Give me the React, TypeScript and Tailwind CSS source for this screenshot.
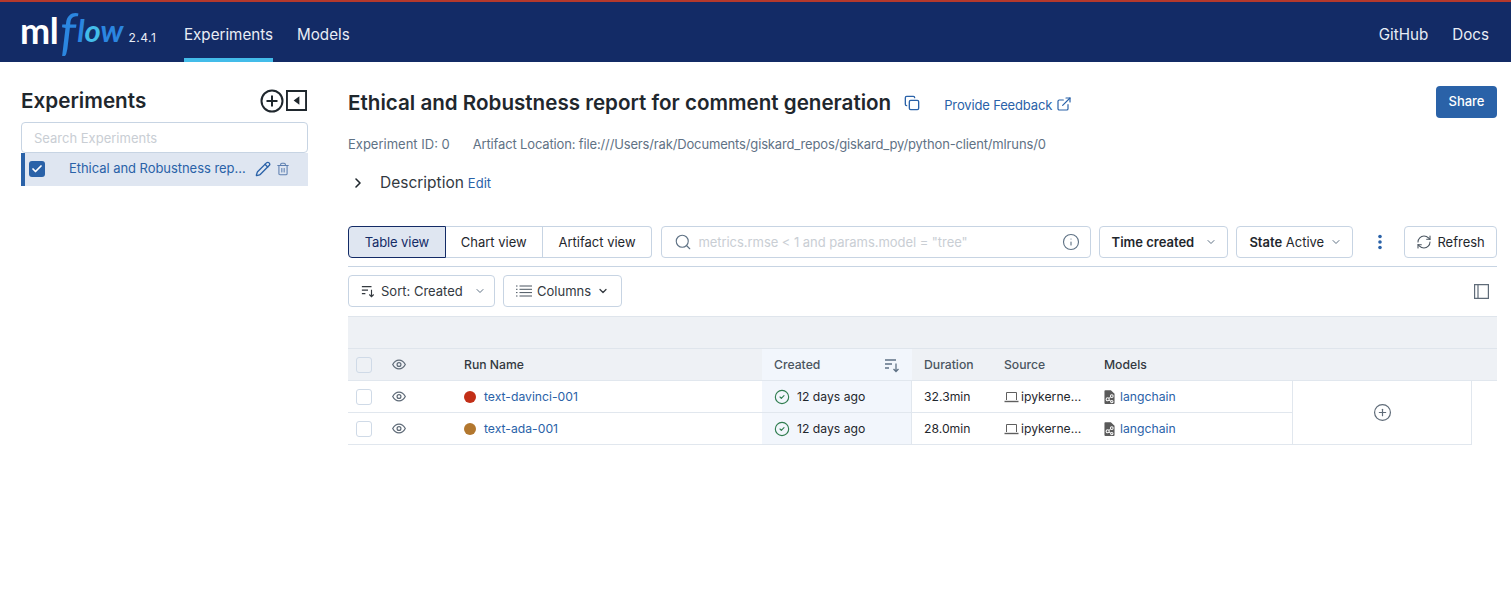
import { ChevronDown, ChevronRight, Pencil, Trash2, Search, Info, RefreshCw, Copy, ExternalLink, Check, CirclePlus, CircleCheck } from "lucide-react";

const SortIcon = ({ className }: { className?: string }) => (
  <svg viewBox="0 0 16 16" className={className} fill="none" stroke="currentColor" strokeWidth="1.3">
    <path d="M1 3h11M1 7h7M1 11h4M12 6.5v8M9.5 12l2.5 2.5 2.5-2.5" />
  </svg>
);

const EyeIcon = () => (
  <svg viewBox="0 0 16 12" className="w-[14px] h-[11px] shrink-0" fill="none" stroke="#5f6b78" strokeWidth="1.4">
    <path d="M0.8 6C2.6 2.6 5 1 8 1s5.4 1.6 7.2 5c-1.8 3.4-4.2 5-7.2 5S2.6 9.4 0.8 6z" />
    <circle cx="8" cy="6" r="2.2" />
  </svg>
);

const LaptopIcon = () => (
  <svg viewBox="0 0 15 12" className="w-[15px] h-[12px] shrink-0" fill="none" stroke="#5f5f5f" strokeWidth="1">
    <path d="M2.5 9V1.5h10V9" />
    <path d="M0.5 10.5h14" strokeWidth="1.4" />
  </svg>
);

const ColumnsIcon = () => (
  <svg viewBox="0 0 16 12" className="w-4 h-3 shrink-0" fill="none" stroke="#4a5560" strokeWidth="1">
    <path d="M0 1h1.5M0 4.3h1.5M0 7.6h1.5M0 11h1.5M3.5 1H16M3.5 4.3H16M3.5 7.6H16M3.5 11H16" />
  </svg>
);

const ModelIcon = () => (
  <svg viewBox="0 0 12 16" className="w-[11px] h-[16px] shrink-0">
    <path d="M1.5 0.5h6l4 4v10a1 1 0 0 1-1 1h-9a1 1 0 0 1-1-1v-13a1 1 0 0 1 1-1z" fill="#5a5a5a" />
    <circle cx="4" cy="10.5" r="1.7" fill="none" stroke="#fff" strokeWidth="1.1" />
    <circle cx="8.5" cy="7" r="1.5" fill="none" stroke="#fff" strokeWidth="1.1" />
    <circle cx="8.5" cy="13" r="1.3" fill="none" stroke="#fff" strokeWidth="1.1" />
    <path d="M5.2 9.6l2-1.6M5.4 11.4l2 1" stroke="#fff" strokeWidth="1" />
  </svg>
);

const runs = [
  { name: "text-davinci-001", color: "bg-[#c22f17]", duration: "32.3min" },
  { name: "text-ada-001", color: "bg-[#b2772e]", duration: "28.0min" },
];

const btn = "flex items-center h-8 rounded border";
const line = "border-[#c7d4e3]";

const Header = () => (
  <header className="h-[62px] shrink-0 bg-[#132b66] border-t-2 border-[#b5392c] flex items-stretch justify-between text-[#e8edf5] text-[15.2px]">
    <div className="flex items-stretch">
      <div className="w-[184px] pl-[20px] flex items-center" style={{ fontFamily: "Lato, sans-serif" }}>
        <span className="text-[36px] leading-none font-bold text-white tracking-[-0.5px] mb-1">ml</span>
        <span className="text-[50px] leading-none italic text-[#2b86e0] ml-[2px] mb-[4px]">f</span>
        <span className="text-[31px] leading-none italic font-bold text-[#2b86e0] ml-[1px] mb-1">l<span className="text-[#43bce9]">o</span>w</span>
        <span className="text-xs ml-[5px] mt-[12px] tracking-[0.5px]" style={{ fontFamily: "Inter, sans-serif" }}>2.4.1</span>
      </div>
      <div className="w-[89px] flex items-center justify-center border-b-4 border-[#43bce9] pt-[10px] mr-6">Experiments</div>
      <div className="flex items-center pt-[6px]">Models</div>
    </div>
    <div className="flex items-center gap-6 pr-[22px] pt-[6px]">
      <span>GitHub</span>
      <span>Docs</span>
    </div>
  </header>
);

const Sidebar = () => (
  <aside className="w-[348px] shrink-0 pl-[21px] pr-[40px] pt-[25px]">
    <div className="flex items-center justify-between h-[27px]">
      <h2 className="text-[20.7px] font-semibold text-[#1f272d]">Experiments</h2>
      <div className="flex items-center gap-[2px] mr-px">
        <svg viewBox="0 0 24 24" className="w-6 h-6" fill="none" stroke="#1f272d" strokeWidth="2">
          <circle cx="12" cy="12" r="10.5" />
          <path d="M12 6.5v11M6.5 12h11" />
        </svg>
        <svg viewBox="0 0 22 22" className="w-[21px] h-[21px]">
          <path d="M1 1h20v20H1z" fill="none" stroke="#1f272d" strokeWidth="2" />
          <path d="M14 6.5v9L8 11z" fill="#1f272d" />
        </svg>
      </div>
    </div>
    <div className="mt-[8px] h-[31px] pt-[2px] border border-[#c7d4e3] rounded flex items-center px-3 text-[13px] text-[#c9ced4]">Search Experiments</div>
    <div className="h-[33px] pb-px bg-[#dfe6f1] border-l-4 border-[#2a62a8] flex items-center text-[13px] text-[#2a62a8]">
      <span className="ml-[4px] w-4 h-4 rounded-[3px] bg-[#2a62a8] flex items-center justify-center">
        <Check className="w-3 h-3 text-white" strokeWidth={3.5} />
      </span>
      <span className="ml-6 w-[176px] whitespace-nowrap tracking-[-0.05px]">Ethical and Robustness rep…</span>
      <Pencil className="w-4 h-4 ml-[10px]" strokeWidth={2} />
      <Trash2 className="w-[14px] h-[14px] ml-[5px] text-[#5d7fb0]" strokeWidth={1.8} />
    </div>
  </aside>
);

const Toolbar = () => (
  <div className="flex items-center h-8 mt-[33px] text-[13px] text-[#1f272d]">
    <div className={`${btn} justify-center w-[98px] pt-[2px] tracking-[-0.1px] bg-[#dfe6f1] border-[#132b66] rounded-r-none text-[#132b66]`}>Table view</div>
    <div className={`${btn} ${line} justify-center w-[97px] pt-[2px] border-l-0 rounded-none`}>Chart view</div>
    <div className={`${btn} ${line} justify-center w-[110px] pt-[2px] border-l-0 rounded-l-none`}>Artifact view</div>
    <div className={`${btn} ${line} w-[430px] ml-[9px] pl-3 pr-[10px]`}>
      <Search className="w-[18px] h-[18px] text-[#5f7285]" strokeWidth={1.5} />
      <span className="ml-[6px] mt-[2px] flex-1 text-[#c9ced4] tracking-[-0.05px]">metrics.rmse &lt; 1 and params.model = "tree"</span>
      <Info className="w-[18px] h-[18px] text-[#5f7285]" strokeWidth={1.5} />
    </div>
    <div className={`${btn} ${line} w-[130px] ml-2 pl-3 pr-[10px] justify-between font-semibold`}>
      <span className="mt-[2px]">Time created</span>
      <ChevronDown className="w-3 h-3 text-[#5f7285]" />
    </div>
    <div className={`${btn} ${line} w-[117px] ml-2 pl-3 pr-[10px] justify-between`}>
      <span className="mt-[2px]"><span className="font-semibold">State</span> Active</span>
      <ChevronDown className="w-3 h-3 text-[#5f7285]" />
    </div>
    <svg viewBox="0 0 4 16" className="w-1 h-4 ml-[25px]" fill="#2a62a8">
      <circle cx="2" cy="2.5" r="1.8" />
      <circle cx="2" cy="8" r="1.8" />
      <circle cx="2" cy="13.5" r="1.8" />
    </svg>
    <div className={`${btn} ${line} w-[93px] ml-[22px] justify-center gap-[5px]`}>
      <RefreshCw className="w-4 h-4 text-[#4a5560]" strokeWidth={1.6} />
      <span className="mt-[2px]">Refresh</span>
    </div>
  </div>
);

const Cell = ({ children, className = "" }: { children?: React.ReactNode; className?: string }) => (
  <div className={`flex items-center border-b border-[#e1e7ee] min-w-0 ${className}`}>{children}</div>
);

// Text sits a pixel lower in the cell than the icons beside it
const Txt = ({ children, className = "" }: { children: React.ReactNode; className?: string }) => (
  <span className={`mt-[2px] whitespace-nowrap ${className}`}>{children}</span>
);

const Box = () => <span className="w-4 h-4 rounded-[3px] border border-[#cfdae7] bg-transparent" />;

const RunsTable = () => (
  <div className="mt-[9px] text-[12.2px]">
    <div className="h-[33px] bg-[#eef1f5] border-y border-[#dfe5ec]" />
    <div className="grid grid-cols-[68px_346px_150px_80px_100px_201px_179px_25px] auto-rows-[32px]">
      <Cell className="bg-[#eef1f5] pl-2 gap-5">
        <Box />
        <EyeIcon />
      </Cell>
      <Cell className="bg-[#eef1f5] pl-[48px] font-medium text-[#33393f]"><Txt>Run Name</Txt></Cell>
      <Cell className="bg-[#f2f6fc] pl-3 pr-[12px] font-medium text-[#4a5560] justify-between">
        <Txt>Created</Txt>
        <SortIcon className="w-4 h-4 text-[#5f7285]" />
      </Cell>
      <Cell className="bg-[#eef1f5] pl-3 font-medium text-[#4a5560]"><Txt>Duration</Txt></Cell>
      <Cell className="bg-[#eef1f5] pl-3 font-medium text-[#4a5560]"><Txt>Source</Txt></Cell>
      <Cell className="bg-[#eef1f5] pl-3 font-medium text-[#33393f]"><Txt>Models</Txt></Cell>
      <Cell className="bg-[#eef1f5]" />
      <Cell className="bg-[#eef1f5]" />
      {runs.map((run, i) => (
        <div key={run.name} className="contents">
          <Cell className="pl-2 gap-5">
            <Box />
            <EyeIcon />
          </Cell>
          <Cell className="pl-[48px] text-[#2a62a8]">
            <span className={`w-3 h-3 rounded-full ${run.color}`} />
            <Txt className="ml-2">{run.name}</Txt>
          </Cell>
          <Cell className="bg-[#f2f6fc] pl-3 border-r border-r-[#e1e7ee] text-[#1f272d]">
            <CircleCheck className="w-4 h-4 text-[#2f7d4f]" strokeWidth={1.7} />
            <Txt className="ml-[7px]">12 days ago</Txt>
          </Cell>
          <Cell className="pl-3 text-[#1f272d]"><Txt>{run.duration}</Txt></Cell>
          <Cell className="pl-3 text-[#1f272d]">
            <LaptopIcon />
            <Txt className="ml-[2px]">ipykerne…</Txt>
          </Cell>
          <Cell className="pl-3 border-r border-r-[#e1e7ee] text-[#2a62a8]">
            <ModelIcon />
            <Txt className="ml-[5px]">langchain</Txt>
          </Cell>
          {i === 0 && (
            <Cell className="row-span-2 justify-center border-r border-r-[#e1e7ee] text-[#5f6b78]">
              <CirclePlus className="w-[19px] h-[19px]" strokeWidth={1.5} />
            </Cell>
          )}
          {i === 0 && <div className="row-span-2" />}
        </div>
      ))}
    </div>
  </div>
);

export default function App() {
  return (
    <div className="w-[1511px] h-[613px] flex flex-col bg-white overflow-hidden" style={{ fontFamily: "Inter, sans-serif" }}>
      <Header />
      <div className="flex flex-1 min-h-0">
        <Sidebar />
        <main className="w-[1149px] pt-[24px]">
          <div className="flex items-start justify-between h-8">
            <div className="flex items-center h-[34px]">
              <h1 className="text-[20.6px] font-semibold text-[#1f272d] whitespace-nowrap">Ethical and Robustness report for comment generation</h1>
              <Copy className="w-4 h-4 ml-[13px] text-[#2a62a8]" strokeWidth={2} />
              <span className="ml-[24px] mt-[6px] text-[13px] text-[#2a62a8] tracking-[-0.15px]">Provide Feedback</span>
              <ExternalLink className="w-4 h-4 ml-[4px] mt-[2px] text-[#2a62a8]" strokeWidth={1.8} />
            </div>
            <button className="w-[61px] h-8 rounded bg-[#2a62a8] text-white text-[13px] font-medium">Share</button>
          </div>
          <div className="flex mt-[17px] text-[13px] text-[#5f7285] gap-[23px] h-5 items-center">
            <span>Experiment ID: 0</span>
            <span className="tracking-[-0.15px]">Artifact Location: file:///Users/rak/Documents/giskard_repos/giskard_py/python-client/mlruns/0</span>
          </div>
          <div className="flex items-center mt-[18px] h-5">
            <ChevronRight className="w-4 h-4 ml-[2px] text-[#1f272d]" strokeWidth={2.4} />
            <span className="ml-[14px] text-[15.5px] text-[#33393f]">Description</span>
            <span className="ml-[4px] mt-[2px] text-[13px] text-[#2a62a8]">Edit</span>
          </div>
          <Toolbar />
          <div className="mt-2 border-t border-[#c7d4e3]" />
          <div className="flex items-center justify-between mt-2 text-[13px] text-[#33393f]">
            <div className="flex gap-2">
              <div className={`${btn} ${line} w-[147px] pl-3 pr-2`}>
                <SortIcon className="w-[14px] h-[14px]" />
                <span className="ml-[6px] mt-[2px] flex-1">Sort: Created</span>
                <ChevronDown className="w-3 h-3 text-[#5f7285]" />
              </div>
              <div className={`${btn} ${line} w-[119px] pl-3`}>
                <ColumnsIcon />
                <span className="ml-[5px] mt-[2px]">Columns</span>
                <ChevronDown className="w-3 h-3 ml-[6px]" strokeWidth={2.5} />
              </div>
            </div>
            <svg viewBox="0 0 15 15" className="w-[15px] h-[15px] mr-2" fill="none" stroke="#5f6b78" strokeWidth="1.2">
              <path d="M0.6 0.6h13.8v13.8H0.6zM4 0.6v13.8" />
            </svg>
          </div>
          <RunsTable />
        </main>
      </div>
    </div>
  );
}
